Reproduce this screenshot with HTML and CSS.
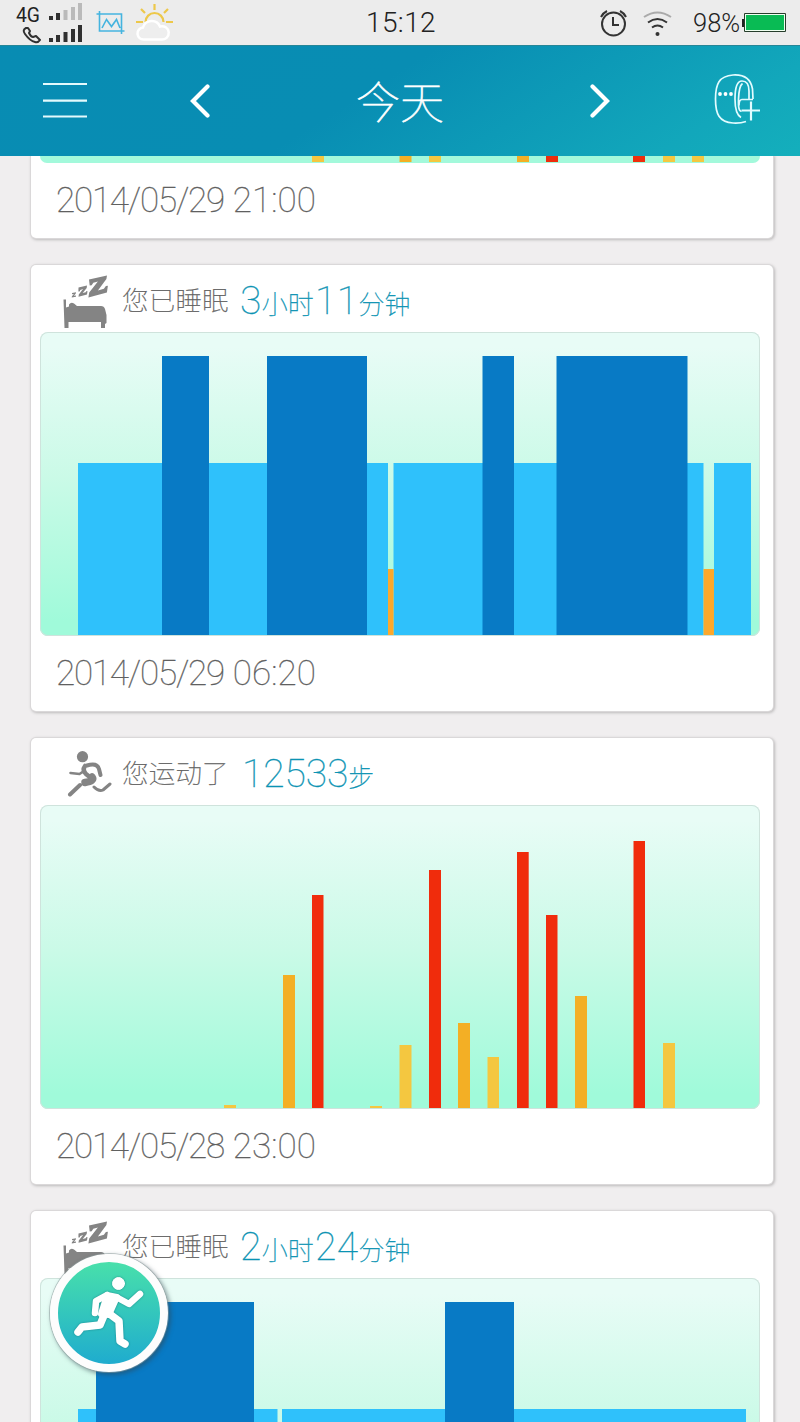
FILE: index.html
```html
<!DOCTYPE html>
<html lang="zh-CN">
<head>
<meta charset="utf-8">
<title>今天</title>
<link rel="stylesheet" href="styles.css">
</head>
<body>
<svg class="defs" width="0" height="0">
  <symbol id="bed" viewBox="0 0 48 54">
    <path d="M1.500 24.500h2.500v8l3-1v-2q2-3 5-1l3 2.500h24q3 0 4 3l1.500 6v8l-1.500 1v4h-4v-6H6.500v6H2.500z" fill="#848484"/>
    <path d="M10 18l4-.8-.2 1.300-1.900 2.300 2.200-.4-.2 1.400-4.200.8.2-1.400 2-2.300-1.900.3zM16.500 12.500l8.500-2-.3 2.500-4 5 3-.7.8-1.400 1 .3-.5 3.300-8.500 2.300.3-2.200 4.200-5.500-2.700.8-.7 1.500-1.200.2zM27 4.500l18-4-.6 3.500-8.500 11.500 6-1.700 2-2.800 2-.2-1 6.700-18.500 5 .8-5 8.700-11-4.600 1.200-1.600 2.600-2 .2z" fill="#848484"/>
  </symbol>
  <symbol id="jog" viewBox="0 0 46 46">
    <circle cx="16.500" cy="5.700" r="5.600" fill="#848484"/>
    <g fill="none" stroke="#848484" stroke-linecap="round" stroke-linejoin="round">
      <path d="M21 14.500q10-3 12 3.500l1.500 6" stroke-width="4"/>
      <path d="M19 15q-3 4 1 8l5 4" stroke-width="4.500"/>
      <path d="M4.500 22l9 1 3-2" stroke-width="2.600"/>
      <path d="M26 26q3 4-7 5.500" stroke-width="7.500"/>
      <path d="M14 34l-10 9.500" stroke-width="4"/>
      <path d="M28 36q5 5 9 3l7-6" stroke-width="3"/>
    </g>
  </symbol>
</svg>

<header class="status">
  <svg class="status-left" viewBox="0 0 190 45" width="190" height="45">
    <text x="16" y="22" class="net" textLength="24" lengthAdjust="spacingAndGlyphs">4G</text>
    <g fill="#303030"><path d="M49 16h4v4h-4zM56 13h4v7h-4zM49 38h4v4h-4zM56 35h4v7h-4zM63.500 32h4v10h-4zM71 29h4v13h-4zM78 25h4v17h-4z"/></g>
    <path d="M63.500 10h4v10h-4zM71 7h4v13h-4zM78 3h4v17h-4z" fill="#bababa"/>
    <path d="M26 28q-4 2-1 6 5 7 10 8 3 1 5-2l-4-4-3 1q-2 0-4-4l1-2-2-3z" fill="none" stroke="#303030" stroke-width="2" stroke-linejoin="round"/>
    <path d="M96.500 14h25v20M99.500 11v20h25M102 28l4.500-8.500 5 7 5-7 3.500 8.500" fill="none" stroke="#45b4df" stroke-width="1.600"/>
    <g fill="none" stroke="#edc84a" stroke-width="2.200">
      <path d="M145.500 22a9 9 0 1 1 18 0M154.500 4v6M141 9l4 4M168 9l-4 4M136 22h7M166 22h7"/>
    </g>
    <path d="M144 39.500a6 6 0 0 1-1-12 9 9 0 0 1 17-1 6.700 6.700 0 1 1 1 13z" fill="#eee" stroke="#fff" stroke-width="2.500"/>
  </svg>
  <span class="clock">15:12</span>
  <div class="status-right">
    <svg viewBox="0 0 72 32" width="72" height="32">
      <g fill="none" stroke="#333" stroke-width="2">
        <circle cx="13.500" cy="17" r="11.500"/><path d="M13 10v8h6M1 10q2-4 6-6M20 4q4 2 6 6"/>
        <path d="M48 15.500q9.500-7 19 0M52 20.500q5.500-4 11 0"/>
        <path d="M44 10q13.500-9 27 0" stroke="#aaa"/>
      </g><circle cx="57.500" cy="27" r="2" fill="#333"/>
    </svg>
    <span class="percent">98%</span>
    <svg viewBox="0 0 44 20" width="44" height="20"><path d="M0 6h3v8H0z" fill="#222"/><path d="M2.500.5h41v18h-41z" fill="#effff0" stroke="#263d2b"/><path d="M4 2h38v15H4z" fill="#09bb54"/></svg>
  </div>
</header>

<nav class="bar">
  <svg class="menu" viewBox="0 0 46 40" width="46" height="40"><path d="M1 3h44M1 19.700h44M1 35.500h44" stroke="#e4fafd" stroke-width="2.200"/></svg>
  <svg class="prev" viewBox="0 0 22 34" width="22" height="34"><path d="M18.500 2.500L4 17l14.500 14.500" fill="none" stroke="#fff" stroke-width="4.200" stroke-linecap="round"/></svg>
  <h1 class="title">今天</h1>
  <svg class="next" viewBox="0 0 22 34" width="22" height="34"><path d="M3.500 2.500L18 17 3.500 31.500" fill="none" stroke="#fff" stroke-width="4.200" stroke-linecap="round"/></svg>
  <svg class="band" viewBox="0 0 48 52" width="48" height="52">
    <g fill="none" stroke="#e2fcff" stroke-width="1.700">
      <path d="M33 48.500q-6 2-13 1.500C6 49 2.500 41 2.500 26S6 3 20 2q17-1 19.500 14l.5 10"/>
      <path d="M28 44.500Q22 41 22 26 22 8 29 8q7 0 7 10v8M29.500 10.500Q26 13 25.500 26t3 12M40 26.500H29q-3 0-3 6"/>
      <path d="M28.500 37.500H47M38 28.500v19" stroke-width="2.200"/>
    </g>
    <g fill="#fff"><circle cx="7" cy="21" r="1.900"/><circle cx="12.500" cy="21" r="1.900"/><circle cx="18" cy="21" r="1.900"/></g>
  </svg>
</nav>

<main class="feed">
  <section class="card card-cut">
    <svg class="chart chart-strip" viewBox="0 0 720 7">
      <g fill="#f4c740"><path d="M272 0h12v6h-12zM389 0h12v6h-12zM623 0h12v6h-12zM652 0h12v6h-12z"/></g>
      <path d="M359.500 0h12v6h-12zM477 0h12v6h-12z" fill="#f3af25"/>
      <path d="M506 0h12v6h-12zM593 0h12v6h-12z" fill="#ee2d0c"/>
    </svg>
    <p class="date">2014/05/29 <span class="time">21:00</span></p>
  </section>

  <section class="card">
    <div class="head">
      <svg class="icon bed"><use href="#bed"/></svg>
      <span class="label">您已睡眠</span>
      <p class="value"><b>3</b>小时<b class="minutes">11</b>分钟</p>
    </div>
    <svg class="chart" viewBox="0 0 720 304">
      <path d="M38 131h310v172H38zM353.500 131h310v172h-310zM674 131h37v172h-37z" fill="#2fc1fb"/>
      <path d="M122 24h47v279h-47zM227 24h100v279H227zM442.500 24H474v279h-31.500zM516.500 24h131v279h-131z" fill="#087ac5"/>
      <path d="M348 237h5.500v66H348zM663.500 237H674v66h-10.500z" fill="#fca82c"/>
    </svg>
    <p class="date">2014/05/29 <span class="time">06:20</span></p>
  </section>

  <section class="card">
    <div class="head">
      <svg class="icon jog"><use href="#jog"/></svg>
      <span class="label">您运动了</span>
      <p class="value steps"><b>12533</b>步</p>
    </div>
    <svg class="chart" viewBox="0 0 720 304">
      <path d="M184 300h12v3h-12zM330 301h12v2h-12zM359.500 240h12v63h-12zM447.500 252H459v51h-11.500zM623 238h12v65h-12z" fill="#f4c740"/>
      <path d="M243 170h12v133h-12zM418 218h12v85h-12zM535 191h12v112h-12z" fill="#f3af25"/>
      <path d="M272 90h11.500v213H272zM389 65h12v238h-12zM477 47h11.700v256H477zM506 110h11.500v193H506zM593.500 36H605v267h-11.500z" fill="#f02c0c"/>
    </svg>
    <p class="date">2014/05/28 <span class="time">23:00</span></p>
  </section>

  <section class="card">
    <div class="head">
      <svg class="icon bed"><use href="#bed"/></svg>
      <span class="label">您已睡眠</span>
      <p class="value"><b>2</b>小时<b class="minutes">24</b>分钟</p>
    </div>
    <svg class="chart" viewBox="0 0 720 304">
      <path d="M38 131h199.500v172H38zM242 131h464v172H242z" fill="#2fc1fb"/>
      <path d="M56 24h158v279H56zM405 24h69v279h-69z" fill="#087ac5"/>
    </svg>
  </section>
</main>

<button class="fab" aria-label="运动">
  <svg viewBox="0 0 104 104" width="104" height="104">
    <g fill="#fff" stroke="#fff" stroke-linecap="round" stroke-linejoin="round">
      <circle cx="61.500" cy="22.500" r="6"/>
      <path d="M50 34l10 2-8 18-8-1z" stroke-width="6"/>
      <g fill="none"><path d="M50 34l-11 6-1 12M61 37l11 6 11-10" stroke-width="6.500"/>
      <path d="M48 52l-5 12-18 2-4 5M50 51l12 9 1 20 5 3" stroke-width="7.500"/></g>
    </g>
  </svg>
</button>
</body>
</html>
```
FILE: styles.css
```css
* { box-sizing: border-box; }
body {
  margin: 0;
  width: 800px;
  height: 1422px;
  overflow: hidden;
  display: flex;
  flex-direction: column;
  background: #f0eeef;
  font-family: Roboto, "Noto Sans CJK SC", sans-serif;
  font-weight: 100;
}
svg { display: block; flex: none; }
.defs { position: absolute; }
h1, p { margin: 0; }
b { font-weight: inherit; }

.status {
  flex: none;
  height: 45px;
  display: grid;
  grid-template-columns: 200px 400px 200px;
  align-items: center;
  background: #ececec;
  color: #222;
  font-weight: 300;
}
.net { font-size: 21px; font-weight: 400; fill: #222; }
.clock { text-align: center; font-size: 28px; letter-spacing: 0.4px; padding-left: 2px; }
.status-right { display: flex; align-items: center; }
.percent { width: 49px; margin-left: 21px; font-size: 25.5px; white-space: nowrap; }

.bar {
  flex: none;
  height: 111px;
  display: flex;
  align-items: center;
  padding: 0 39px 0 42px;
  background: linear-gradient(148deg, #088cb3 0%, #088db3 45%, #12a7bb 85%, #14afbc 100%);
  border-top: 1px solid #268697;
}
.prev { margin-left: 101px; }
.title { margin: 0 0 3px 145px; width: 90px; font: 100 44px/60px "Noto Sans CJK SC", sans-serif; color: #fff; white-space: nowrap; -webkit-text-stroke: 0.6px #fff; }
.next { margin-left: 143px; }
.band { margin: 0 0 5px auto; }

.feed {
  flex: 1;
  min-height: 0;
  overflow: hidden;
  display: flex;
  flex-direction: column;
  gap: 27px;
  padding: 0 27px 0 31px;
}
.card {
  flex: none;
  height: 446px;
  padding: 0 13px 0 9px;
  background: #fff;
  border-radius: 5px;
  box-shadow: 0 0 0 1px #dad8d9, 1px 1px 3px 1px #bcbabb;
}
.card-cut { height: 82px; border-radius: 0 0 5px 5px; }
.head { height: 67px; display: flex; align-items: center; color: #606060; }
.icon { width: 48px; height: 54px; margin: 6px 0 0 22px; }
.jog { width: 46px; height: 46px; margin: 4px 0 0 26px; }
.label { width: 110px; margin: 1px 0 0 12px; font: 100 26.500px/40px "Noto Sans CJK SC", sans-serif; letter-spacing: 0.2px; white-space: nowrap; -webkit-text-stroke: 0.25px #606060; }
.jog + .label { margin-left: 10px; }
.value { margin: 8px 0 0 8px; font: 100 26px/48px Roboto, "Noto Sans CJK SC", sans-serif; color: #0b93b3; white-space: nowrap; -webkit-text-stroke: 0.3px #0b93b3; }
.value b { font-size: 39px; letter-spacing: 0.5px; }
.value .minutes { margin-left: 1px; }
.steps { padding-left: 2px; }
.steps b { letter-spacing: -0.1px; }
.chart {
  width: 720px;
  height: 304px;
  border-radius: 8px;
  background: linear-gradient(180deg, #e8fcf6 5%, #cafae7 48%, #a0fada 95%);
  box-shadow: inset 0 0 0 1px #cfe3dc;
}
.chart-strip { height: 7px; background: #a3f9db; border-radius: 0 0 8px 8px; box-shadow: none; }
.date { padding: 1px 0 0 16px; font-size: 35px; line-height: 74px; color: #606060; letter-spacing: -1.2px; word-spacing: 1.5px; white-space: nowrap; -webkit-text-stroke: 0.3px #606060; }
.time { letter-spacing: 0.1px; }

.fab {
  position: absolute;
  left: 50px;
  top: 1254px;
  width: 118px;
  height: 118px;
  padding: 0;
  border: 8px solid #fdfdfd;
  border-radius: 50%;
  background: linear-gradient(#49e1aa 5%, #1eabcf 95%) border-box;
  box-shadow: 0 0 0 1px rgba(145, 160, 160, 0.55), 2px 2px 4px 1px rgba(50, 70, 80, 0.5);
}
.fab svg { margin: -1px; filter: drop-shadow(0 0 1px rgba(20, 100, 110, 0.6)); }
```
